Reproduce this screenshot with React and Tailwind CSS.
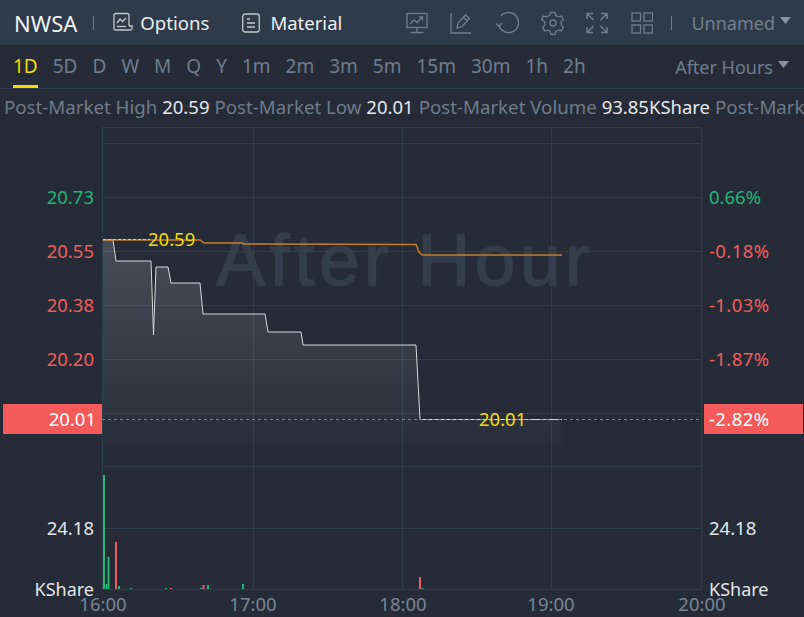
const periods = ['1D', '5D', 'D', 'W', 'M', 'Q', 'Y', '1m', '2m', '3m', '5m', '15m', '30m', '1h', '2h'];
const stats = [
  ['Post-Market High', '20.59'],
  ['Post-Market Low', '20.01'],
  ['Post-Market Volume', '93.85KShare'],
  ['Post-Market', ''],
];

const gridY = [127.5, 143.5, 197.5, 251.5, 305.5, 359.5, 413.5, 466.5, 528.5, 589.5];
const gridX = [102.5, 253.5, 402.5, 551.5, 701.5];

const GREEN = '#22b573';
const RED = '#f25c5c';

const leftLabels = [
  ['20.73', 197, GREEN],
  ['20.55', 251, RED],
  ['20.38', 305, RED],
  ['20.20', 359, RED],
];
const rightLabels = [
  ['0.66%', 197, GREEN],
  ['-0.18%', 251, RED],
  ['-1.03%', 305, RED],
  ['-1.87%', 359, RED],
];

// x, height, colour of the volume bars
const bars = [
  [103, 114, GREEN], [105.5, 5, GREEN], [107.5, 32, GREEN], [115, 47, RED], [118, 3, GREEN],
  [130, 1, GREEN], [165, 1, GREEN], [170, 1, RED], [200, 1, GREEN], [202.5, 4, RED],
  [207, 4, GREEN], [242, 5, GREEN], [419, 12, RED], [421.5, 1, GREEN],
];

const pricePath =
  'M103 240 L113 240 L116 261 L151 261 L153.5 335 L156 267 L168 267 L171 283 L200 283 L203 314 L265 314 L268 332 L301 332 L303 345 L416 345 L420 419.5 L562 419.5';
const avgPath =
  'M103 240 L200 240 L204 243 L242 243 L244 244 L416 244.5 L419 252 L422 255 L562 255';

function OptionsIcon() {
  return (
    <svg width="20" height="20" viewBox="0 0 20 20" fill="none" stroke="#c3c8cf" strokeWidth="1.3">
      <path d="M16 14V3a1.5 1.5 0 0 0-1.5-1.5h-12A1.5 1.5 0 0 0 1 3v13.5A1.5 1.5 0 0 0 2.5 18h15a1.5 1.5 0 0 0 1.5-1.5V14h-3" />
      <path d="M4 11l3-4 2.5 2.5L13 6" />
      <path d="M4 14.5h9" />
    </svg>
  );
}

function MaterialIcon() {
  return (
    <svg width="18" height="20" viewBox="0 0 18 20" fill="none" stroke="#c3c8cf" strokeWidth="1.3">
      <rect x="0.7" y="1" width="16.6" height="18" rx="2.5" />
      <path d="M5 6h3M5 10h8M5 14h8" />
    </svg>
  );
}

function ToolIcons() {
  return (
    <div className="flex items-center text-[#6f7d8e]">
      <svg className="mr-[22px]" width="22" height="22" viewBox="0 0 22 22" fill="none" stroke="currentColor" strokeWidth="1.3">
        <rect x="1" y="1.5" width="20" height="14" />
        <path d="M4 12l4-4 3 2.5 5-5M13 5h3.5v3.5" />
        <path d="M11 15.5V20M4.5 20.5h13" />
      </svg>
      <svg className="mr-[23px]" width="22" height="22" viewBox="0 0 22 22" fill="none" stroke="currentColor" strokeWidth="1.3">
        <path d="M1 1v20h20" />
        <path d="M7 16l1-5 7.5-8 4 3.5-7.5 8z" />
        <path d="M13.5 5.5l4 3.5" />
      </svg>
      <svg className="mr-[22px]" width="24" height="24" viewBox="0 0 24 24" fill="none" stroke="currentColor" strokeWidth="1.4">
        <path d="M4 14.5A10 10 0 1 0 6 5" />
        <path d="M1 12.5l3.2 2.8L7 12" />
      </svg>
      <svg className="mr-[21px]" width="24" height="24" viewBox="0 0 24 24" fill="none" stroke="currentColor" strokeWidth="1.3">
        <path d="M10 1.500h4l.8 3 2.600 1.400 3-.8 2 3.500-2.200 2.200v3.400l2.200 2.200-2 3.500-3-.8-2.600 1.400-.8 3h-4l-.8-3-2.600-1.400-3 .8-2-3.500 2.200-2.200v-3.400L.6 8.600l2-3.500 3 .8 2.600-1.400z" />
        <circle cx="12" cy="12" r="3" />
      </svg>
      <svg className="mr-[23px]" width="22" height="22" viewBox="0 0 22 22" fill="none" stroke="currentColor" strokeWidth="1.5">
        <path d="M1 7V1.500h6M1.500 2l6 6M21 7V1.500h-6M20.500 2l-6 6M1 15v5.500h6M1.500 20l6-6M21 15v5.500h-6M20.500 20l-6-6" />
      </svg>
      <svg width="22" height="22" viewBox="0 0 22 22" fill="none" stroke="currentColor" strokeWidth="1.3">
        <rect x="1" y="1" width="8.500" height="8" />
        <rect x="13" y="1" width="8.500" height="8" />
        <rect x="1" y="13" width="8.500" height="8" />
        <rect x="13" y="13" width="8.500" height="8" />
      </svg>
    </div>
  );
}

function Caret() {
  return (
    <svg width="11" height="7" viewBox="0 0 11 7" className="ml-[5px] mb-[5px] fill-[#8593a5]">
      <path d="M0 0h11L5.500 7z" />
    </svg>
  );
}

function Chart() {
  return (
    <svg width="804" height="490" viewBox="0 127 804 490" className="block" style={{ fontFamily: '"Noto Sans", sans-serif' }}>
      <defs>
        <linearGradient id="area" x1="0" y1="0" x2="0" y2="1">
          <stop offset="0" stopColor="#ffffff" stopOpacity="0.16" />
          <stop offset="1" stopColor="#ffffff" stopOpacity="0.01" />
        </linearGradient>
      </defs>

      {gridY.map((y) => (
        <line key={y} x1="102" x2="702" y1={y} y2={y} stroke="#303e4c" />
      ))}
      {gridX.map((x) => (
        <line key={x} x1={x} x2={x} y1="127" y2="590" stroke="#303e4c" />
      ))}

      <text
        x="405"
        y="285"
        textAnchor="middle"
        fontSize="73"
        letterSpacing="4.5"
        fill="#343e4b"
        stroke="#343e4b"
        strokeWidth="1.5"
        style={{ fontFamily: '"Liberation Sans", sans-serif' }}
      >
        After Hour
      </text>

      <path d={`${pricePath} L562 446 L103 446 Z`} fill="url(#area)" />
      <path d={pricePath} fill="none" stroke="#d5d8dc" strokeWidth="1" />
      <path d={avgPath} fill="none" stroke="#c67e2e" strokeWidth="1.5" />

      <line x1="103" x2="150" y1="239.500" y2="239.500" stroke="#f5d90a" strokeDasharray="3 2" />
      <line x1="102" x2="702" y1="419.500" y2="419.500" stroke="#f25c5c" strokeDasharray="3 3" opacity="0.9" />
      <line x1="525" x2="562" y1="419.500" y2="419.500" stroke="#f5d90a" strokeDasharray="3 6" />

      <text x="148" y="246" fontSize="18.500" fill="#f5d90a">20.59</text>
      <text x="479" y="426" fontSize="18.500" fill="#f5d90a">20.01</text>

      {bars.map(([x, h, color]) => (
        <rect key={x} x={x} y={589 - h} width="2" height={h} fill={color} />
      ))}

      {leftLabels.map(([t, y, c]) => (
        <text key={t} x="94" y={y + 6.500} textAnchor="end" fontSize="18.500" fill={c}>{t}</text>
      ))}
      {rightLabels.map(([t, y, c]) => (
        <text key={t} x="709" y={y + 6.500} fontSize="18.500" letterSpacing={t.startsWith('-') ? 0.4 : 0} fill={c}>{t}</text>
      ))}

      <rect x="3" y="404" width="99" height="30" fill="#f55a5a" />
      <text x="96" y="426" textAnchor="end" fontSize="18.500" fill="#ffffff">20.01</text>
      <rect x="704" y="404" width="99" height="30" fill="#f55a5a" />
      <text x="709" y="426" fontSize="18.500" letterSpacing="0.4" fill="#ffffff">-2.82%</text>

      <text x="94" y="535" textAnchor="end" fontSize="18.500" fill="#e3e5e8">24.18</text>
      <text x="709" y="535" fontSize="18.500" fill="#e3e5e8">24.18</text>
      <text x="94" y="596" textAnchor="end" fontSize="18" fill="#e3e5e8">KShare</text>
      <text x="709" y="596" fontSize="18" fill="#e3e5e8">KShare</text>

      {[['16:00', 103], ['17:00', 253], ['18:00', 403], ['19:00', 551], ['20:00', 702]].map(([t, x]) => (
        <text key={t} x={x} y="611" textAnchor="middle" fontSize="18.500" fill="#788494">{t}</text>
      ))}
    </svg>
  );
}

export default function App() {
  return (
    <div className="w-[804px] h-[617px] overflow-hidden bg-[#252c37] font-['Noto_Sans',sans-serif]">
      <header className="h-[45px] bg-[#2f3a4a] flex items-center pl-[14px] pr-[13px]">
        <span className="text-[22px] text-[#f0f2f4] mt-[1px]">NWSA</span>
        <span className="ml-[16px] w-px h-[14px] bg-[#6f7d8e]" />
        <span className="ml-[19px] flex items-center gap-[7px] text-[18.6px] text-[#eceef1]">
          <OptionsIcon /> <span className="mt-[1px]">Options</span>
        </span>
        <span className="ml-[33px] flex items-center gap-[10px] text-[18.5px] text-[#eceef1]">
          <MaterialIcon /> <span className="mt-[1px]">Material</span>
        </span>
        <div className="ml-auto flex items-center">
          <ToolIcons />
          <span className="ml-[18px] w-px h-[14px] bg-[#6f7d8e]" />
          <span className="ml-[19px] text-[18px] text-[#72808f] mt-[2px]">Unnamed</span>
          <Caret />
        </div>
      </header>

      <nav className="h-[44px] flex items-center border-b border-[#303e4c] pl-[13px] pr-[15px]">
        <div className="flex gap-[15px] h-full">
          {periods.map((p, i) => (
            <span
              key={p}
              className={`h-full pt-[2px] flex items-center text-[19px] border-b-[3px] ${
                i === 0 ? 'text-[#f5d90a] border-[#f5d90a]' : 'text-[#6f7d8e] border-transparent'
              }`}
            >
              {p}
            </span>
          ))}
        </div>
        <span className="ml-auto text-[18px] text-[#6f7d8e] mt-[2px]">After Hours</span>
        <Caret />
      </nav>

      <div className="h-[38px] pl-[4px] pb-[2px] flex items-center gap-[5px] whitespace-nowrap overflow-hidden text-[18.7px]">
        {stats.map(([label, value]) => (
          <span key={label} className="text-[#6f7b8a]">
            {label} <span className="text-[#e6e8eb] text-[18.5px]">{value}</span>
          </span>
        ))}
      </div>

      <Chart />
    </div>
  );
}
